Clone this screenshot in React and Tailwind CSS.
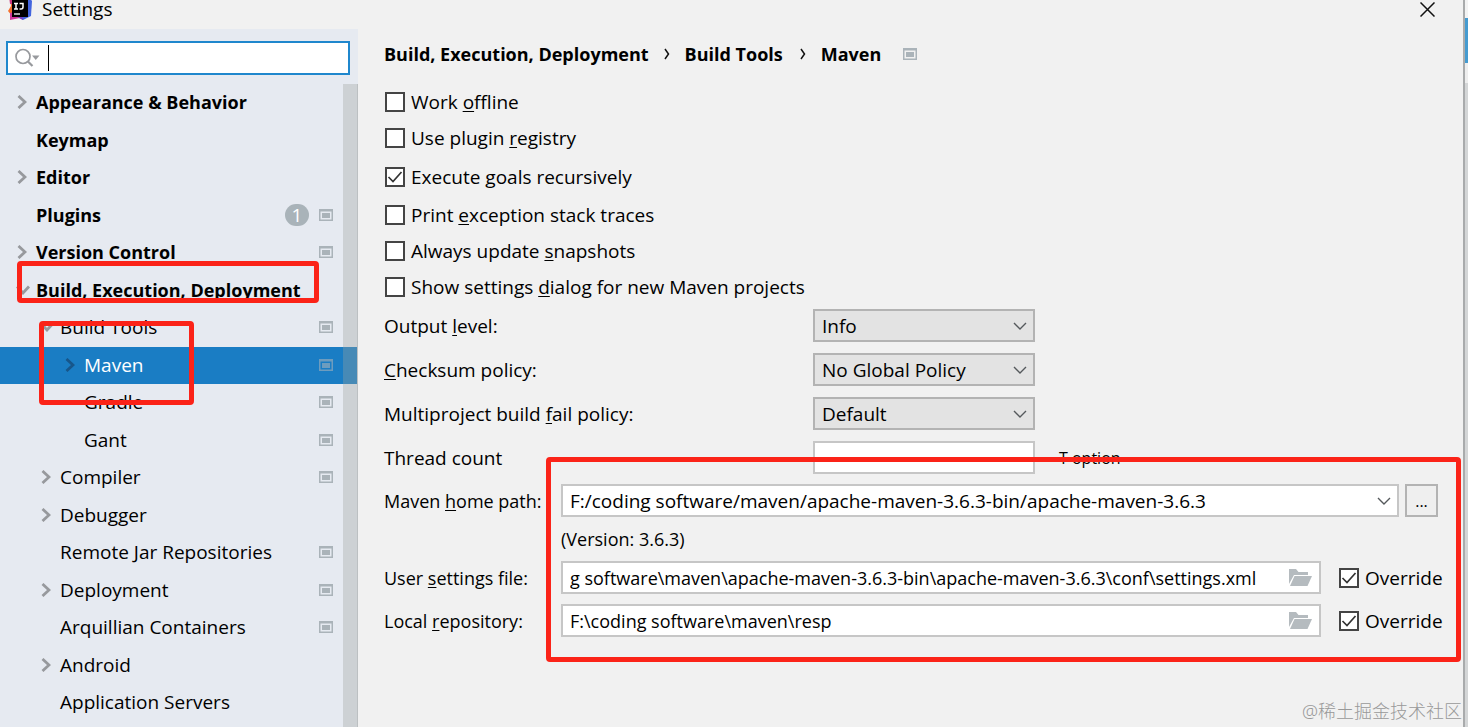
import { useId } from "react";

const WindowIcon = ({ selected }) => (
  <svg width="14" height="12" viewBox="0 0 14 12" className={selected ? "text-[#6d9cbe]" : "text-[#aab3b9]"} aria-hidden="true">
    <path fill="currentColor" fillRule="evenodd" d="M0 0H14V12H0ZM1.500 2.500V10.500H12.500V2.500Z" />
    <rect x="3" y="4" width="8" height="5" fill="currentColor" />
  </svg>
);

const ArrowRight = ({ selected }) => (
  <svg width="10" height="14" viewBox="0 0 10 14" className={selected ? "text-[#17568a]" : "text-[#97999d]"} aria-hidden="true">
    <path d="M1.500 1L8 7L1.500 13" fill="none" stroke="currentColor" strokeWidth="2.800" />
  </svg>
);

const ArrowDown = () => (
  <svg width="14" height="10" viewBox="0 0 14 10" className="-ml-px text-[#97999d]" aria-hidden="true">
    <path d="M1 1.500L7 8L13 1.500" fill="none" stroke="currentColor" strokeWidth="2.800" />
  </svg>
);

const SelectChevron = () => (
  <svg width="14" height="8" viewBox="0 0 14 8" className="pointer-events-none absolute right-2 top-[13px]" aria-hidden="true">
    <path d="M1 1L7 7L13 1" fill="none" stroke="#55595c" strokeWidth="1.400" />
  </svg>
);

const FolderIcon = () => (
  <svg width="23" height="17" viewBox="0 0 23 17" aria-hidden="true">
    <path d="M0 15V0H7L9.500 3H19V6H5Z" fill="#b5bbbf" />
    <path d="M5.500 7H23L18.500 17H1Z" fill="#b5bbbf" />
  </svg>
);

const Logo = () => (
  <svg width="24" height="24" viewBox="0 0 24 24" aria-hidden="true">
    <path d="M2 2H12L10 20L4 20L0 15L3 10Z" fill="#f5702c" />
    <path d="M1 0H9L8 8H2Z" fill="#c9387f" />
    <path d="M2 17L10 15L12 22L2 24Z" fill="#d0369a" />
    <path d="M10 0H20L24 5L23 20L15 24L10 21Z" fill="#4365de" />
    <path d="M9 20L14 19L15 24L11 22Z" fill="#7a3fc0" />
    <rect x="4" y="4" width="16" height="17" fill="#000" />
    <path d="M6 7.500H10M8 7.500V13M6 13H10M11.500 7.500H15V11Q15 13 13 13H11.500" fill="none" stroke="#fff" strokeWidth="1.500" />
    <path d="M6 18H12" stroke="#fff" strokeWidth="1.300" />
  </svg>
);

const tree = [
  { label: "Appearance & Behavior", level: 0, arrow: "right" },
  { label: "Keymap", level: 0 },
  { label: "Editor", level: 0, arrow: "right" },
  { label: "Plugins", level: 0, badge: "1", icon: true },
  { label: "Version Control", level: 0, arrow: "right", icon: true },
  { label: "Build, Execution, Deployment", level: 0, arrow: "down" },
  { label: "Build Tools", level: 1, arrow: "down", icon: true },
  { label: "Maven", level: 2, arrow: "right", icon: true, selected: true },
  { label: "Gradle", level: 2, icon: true },
  { label: "Gant", level: 2, icon: true },
  { label: "Compiler", level: 1, arrow: "right", icon: true },
  { label: "Debugger", level: 1, arrow: "right" },
  { label: "Remote Jar Repositories", level: 1, icon: true },
  { label: "Deployment", level: 1, arrow: "right", icon: true },
  { label: "Arquillian Containers", level: 1, icon: true },
  { label: "Android", level: 1, arrow: "right" },
  { label: "Application Servers", level: 1 },
];

const indents = ["pl-[17px]", "pl-[41px]", "pl-[65px]"];

function TreeRow({ item }) {
  return (
    <li className="odd:h-[38px] even:h-[37px]">
      <button
        type="button"
        className={`flex h-full w-full items-center pb-[2px] pr-[25px] text-left ${indents[item.level]} ${item.level === 0 ? "text-[18px] font-bold" : ""} ${item.selected ? "bg-[#1a7dc4] text-white" : ""}`}
      >
        <span className="flex w-[19px] shrink-0 items-center">
          {item.arrow === "right" && <ArrowRight selected={item.selected} />}
          {item.arrow === "down" && <ArrowDown />}
        </span>
        <span className="grow whitespace-nowrap">{item.label}</span>
        {item.badge && (
          <span className="mr-[10px] flex h-[22px] w-6 items-center justify-center rounded-full bg-[#a9b3b9] text-[19px] font-normal text-white">{item.badge}</span>
        )}
        {item.icon && <WindowIcon selected={item.selected} />}
      </button>
    </li>
  );
}

function Mnemonic({ text }) {
  const [before, key, after] = text.split("_");
  return (
    <span className="whitespace-nowrap">
      {before}
      {key && <span className="underline decoration-1 underline-offset-2">{key}</span>}
      {after}
    </span>
  );
}

function Check({ text, checked, className }) {
  return (
    <label className={`flex items-center gap-[6px] ${className}`}>
      <span className="grid size-5 shrink-0">
        <input
          type="checkbox"
          defaultChecked={checked}
          className="peer col-start-1 row-start-1 size-5 appearance-none border-2 border-[#444] bg-white"
        />
        <svg viewBox="0 0 20 20" className="pointer-events-none invisible col-start-1 row-start-1 size-5 peer-checked:visible" aria-hidden="true">
          <path d="M3.500 10L8 14.500L16.500 5" fill="none" stroke="#333" strokeWidth="1.700" />
        </svg>
      </span>
      <Mnemonic text={text} />
    </label>
  );
}

function Choice({ id, value, className }) {
  return (
    <div className={`relative h-[33px] text-[19px] ${className}`}>
      <select id={id} className="h-full w-full appearance-none border-2 border-inherit pl-[7px] pr-7">
        <option>{value}</option>
      </select>
      <SelectChevron />
    </div>
  );
}

function SelectRow({ text, value }) {
  const id = useId();
  return (
    <div className="flex items-center">
      <label htmlFor={id} className="w-[429px] shrink-0"><Mnemonic text={text} /></label>
      <Choice id={id} value={value} className="w-[222px] border-[#b3b3b3] bg-[#e3e3e3]" />
    </div>
  );
}

function FileRow({ text, value }) {
  const id = useId();
  return (
    <div className="flex items-center">
      <label htmlFor={id} className="w-[177px] shrink-0"><Mnemonic text={text} /></label>
      <div className="flex h-[33px] min-w-0 grow items-center border-2 border-[#c6c6c6] bg-white pr-[7px]">
        <input id={id} type="text" defaultValue={value} className="min-w-0 grow bg-transparent pl-[7px] outline-none" />
        <button type="button" aria-label="Browse" className="shrink-0"><FolderIcon /></button>
      </div>
      <Check text="Override" checked className="ml-[18px] w-[100px] shrink-0 text-[19px]" />
    </div>
  );
}

const Separator = () => (
  <svg width="6" height="12" viewBox="0 0 6 12" aria-hidden="true">
    <path d="M1 1L4.500 6L1 11" fill="none" stroke="#111" strokeWidth="1.500" />
  </svg>
);

export default function App() {
  const threadId = useId();
  const homeId = useId();
  return (
    <div className="relative flex h-screen overflow-hidden bg-[#f1f1f1] font-['Noto_Sans','Noto_Sans_CJK_SC',sans-serif] text-[19px] leading-6 text-black">
      <div className="flex min-w-0 grow flex-col font-['Open_Sans','Noto_Sans',sans-serif]">
        <header className="flex h-[29px] shrink-0 items-start justify-between pl-2 pr-7">
          <div className="flex items-start gap-[10px]">
            <div className="-mt-1"><Logo /></div>
            <h1 className="leading-[18px]">Settings</h1>
          </div>
          <button type="button" aria-label="Close" className="pt-[2px]">
            <svg width="15" height="15" viewBox="0 0 15 15" aria-hidden="true">
              <path d="M0.500 0.500L14.500 14.500M14.500 0.500L0.500 14.500" stroke="#111" strokeWidth="1.500" />
            </svg>
          </button>
        </header>

        <div className="flex min-h-0 grow">
          <aside className="flex w-[358px] shrink-0 flex-col bg-[#e6eaf1]">
            <div className="px-[6px] pb-[9px] pt-3">
              <div className="mr-[2px] flex h-[34px] items-center border-2 border-[#1f87cd] bg-white pl-[7px]">
                <svg width="25" height="20" viewBox="0 0 25 20" className="shrink-0" aria-hidden="true">
                  <circle cx="8" cy="8.500" r="7" fill="none" stroke="#97999d" strokeWidth="1.700" />
                  <path d="M13 13.500L17.500 18" stroke="#97999d" strokeWidth="2.200" />
                  <path d="M17 7.500H24.500L20.750 12Z" fill="#97999d" />
                </svg>
                <span className="ml-2 h-[26px] w-px bg-black" />
                <input type="text" aria-label="Search settings" className="min-w-0 grow bg-transparent outline-none" />
              </div>
            </div>
            <nav className="relative min-h-0 grow overflow-hidden">
              <ul>
                {tree.map((item) => <TreeRow key={item.label} item={item} />)}
              </ul>
              <div className="absolute inset-y-0 right-0 w-[15px] border-r border-[#bcc0c2] bg-[#9ea29e]/35" />
            </nav>
          </aside>

          <main className="min-w-0 grow pl-[26px] pr-[24px] pt-[13px]">
            <nav className="flex items-center text-[18px] font-bold">
              <span>Build, Execution, Deployment</span>
              <span className="mx-[15px]"><Separator /></span>
              <span>Build Tools</span>
              <span className="ml-[17px] mr-[15px]"><Separator /></span>
              <span>Maven</span>
              <span className="ml-[22px]"><WindowIcon /></span>
            </nav>

            <div className="mt-[18px] pl-px">
              <Check text="Work _o_ffline" className="h-9" />
              <Check text="Use plugin _r_egistry" className="h-9" />
              <Check text="Execute _g_oals recursively" checked className="h-[41px]" />
              <Check text="Print _e_xception stack traces" className="h-9" />
              <Check text="Always update _s_napshots" className="h-9" />
              <Check text="Show settings _d_ialog for new Maven projects" className="h-9" />
            </div>

            <div className="mt-1 flex flex-col gap-[11px]">
              <SelectRow text="Output _l_evel:" value="Info" />
              <SelectRow text="_C_hecksum policy:" value="No Global Policy" />
              <SelectRow text="Multiproject build _f_ail policy:" value="Default" />
              <div className="flex items-center">
                <label htmlFor={threadId} className="w-[429px] shrink-0">Thread count</label>
                <input id={threadId} type="text" className="h-[33px] w-[222px] border-2 border-[#c6c6c6] bg-white px-2" />
                <span className="ml-6 text-base">T option</span>
              </div>
            </div>

            <div className="mt-[10px] flex flex-col gap-[10px] text-[18px] leading-6">
              <div className="flex items-center">
                <label htmlFor={homeId} className="w-[177px] shrink-0"><Mnemonic text="Maven _h_ome path:" /></label>
                <Choice id={homeId} value="F:/coding software/maven/apache-maven-3.6.3-bin/apache-maven-3.6.3" className="min-w-0 grow border-[#c6c6c6] bg-white" />
                <button type="button" aria-label="Choose Maven home" className="ml-[6px] mr-px h-[33px] w-[33px] shrink-0 border-2 border-[#b3b3b3] bg-[#efefef] text-base">...</button>
              </div>
              <p className="pl-[177px]">(Version: 3.6.3)</p>
              <FileRow text="User _s_ettings file:" value="g software\maven\apache-maven-3.6.3-bin\apache-maven-3.6.3\conf\settings.xml" />
              <FileRow text="Local _r_epository:" value="F:\coding software\maven\resp" />
            </div>
          </main>
        </div>
      </div>

      <div className="flex w-[5px] shrink-0 flex-col border-l-2 border-[#a9abac] bg-[#d4d6d7]">
        <span className="h-[18px] bg-[#f3f3f3]" />
        <span className="h-[45px] bg-[#459bd0]" />
        <span className="h-5 bg-[#eeeeee]" />
      </div>

      <div className="pointer-events-none absolute left-[17px] top-[261px] h-[42px] w-[302px] rounded-[4px] border-[5px] border-[#fb2318]" />
      <div className="pointer-events-none absolute left-[39px] top-[321px] h-[84px] w-[155px] rounded-[4px] border-[5px] border-[#fb2318]" />
      <div className="pointer-events-none absolute left-[546px] right-[7px] top-[457px] h-[205px] rounded-[4px] border-[5px] border-[#fb2318]" />
      <span className="pointer-events-none absolute bottom-1 right-[6px] text-lg leading-6 font-light text-[#999]">@稀土掘金技术社区</span>
    </div>
  );
}
